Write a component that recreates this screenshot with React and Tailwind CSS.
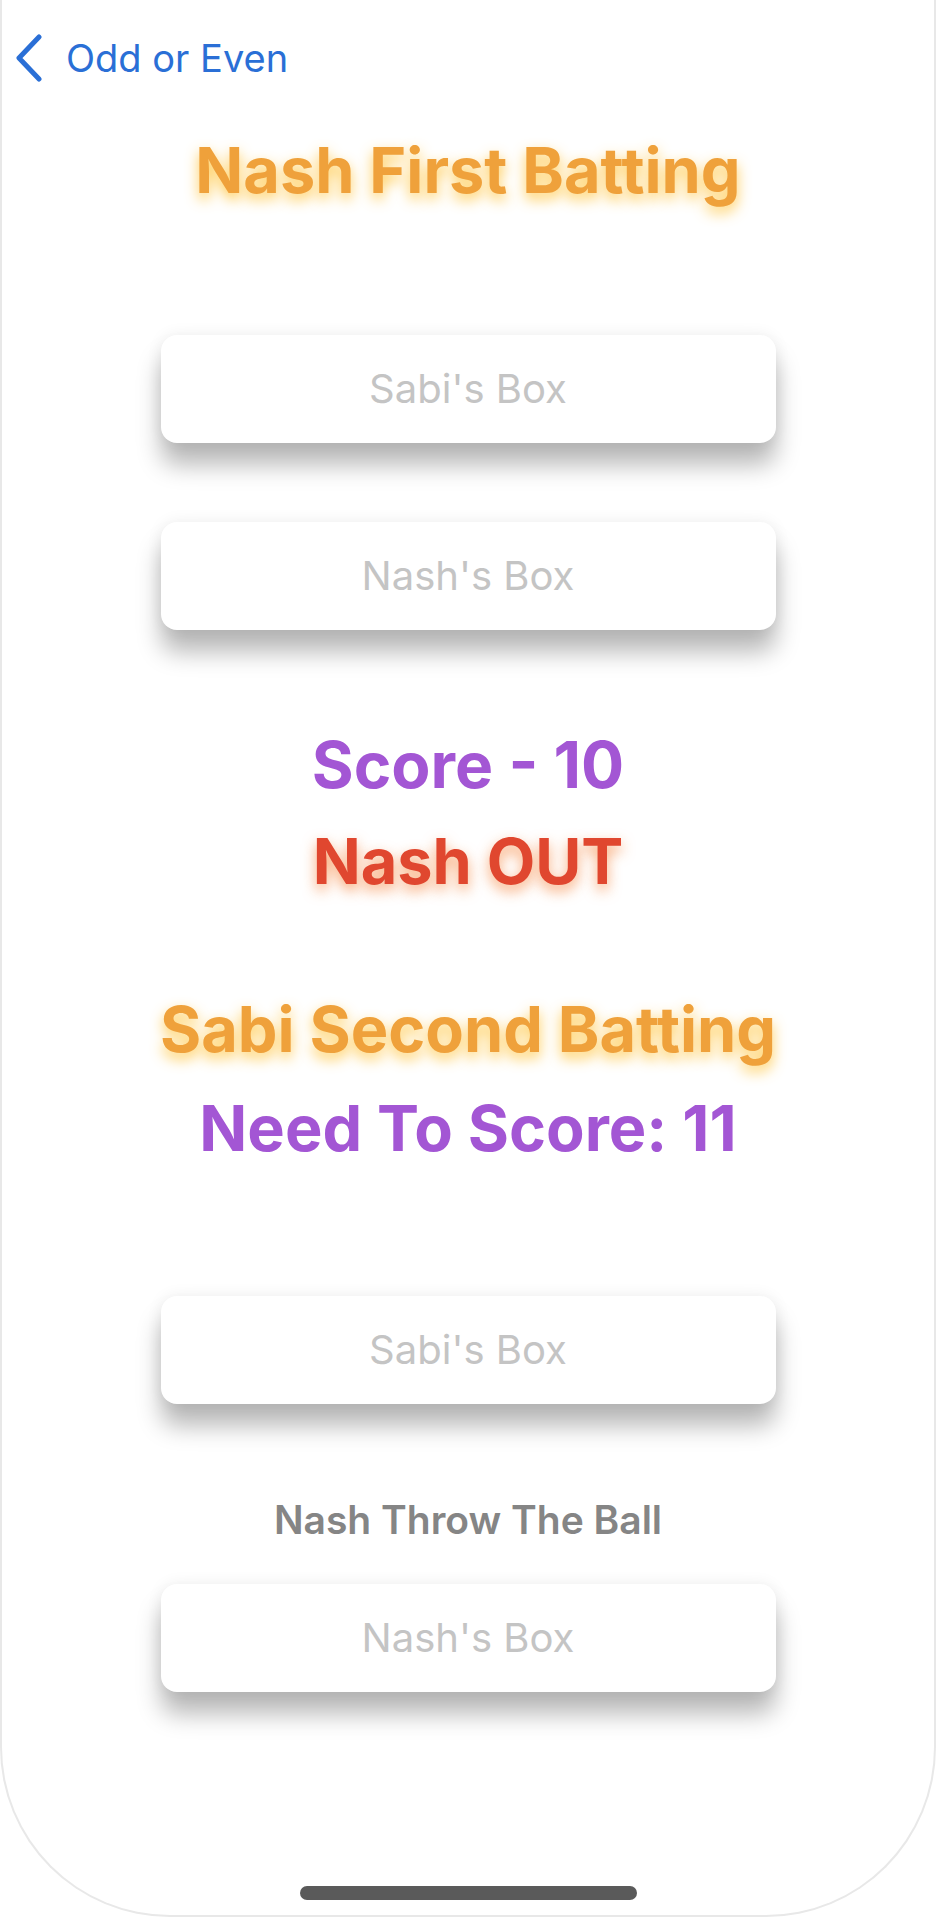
import React from 'react';

const font = { fontFamily: 'Inter, "Noto Sans", sans-serif' };

const Box = ({ label, className = '' }) => (
  <div className={`w-[615px] h-[108px] bg-white rounded-[16px] flex items-center justify-center shadow-[0_22px_24px_rgba(0,0,0,0.28),0_0_16px_rgba(0,0,0,0.07)] ${className}`}>
    <span className="text-[40px] leading-none text-[#c4c4c4]">{label}</span>
  </div>
);

export default function App() {
  return (
    <div className="w-[938px] h-[1919px] bg-white overflow-hidden" style={font}>
      <div className="w-[936px] h-[1917px] border-x-2 border-b-2 border-[#e8e8e8] rounded-b-[170px] flex flex-col items-center">
        {/* nav bar */}
        <div className="self-start mt-[36px] h-[44px] flex items-center">
          <svg width="30" height="48" viewBox="0 0 30 48" className="ml-[12px]">
            <polyline points="25,3 5,24 25,45" fill="none" stroke="#2a6fd6" strokeWidth="5" strokeLinecap="round" strokeLinejoin="round" />
          </svg>
          <span className="ml-[22px] text-[38px] leading-none text-[#2a6fd6]">Odd or Even</span>
        </div>

        <h1 className="mt-[59px] text-[63px] leading-none font-bold text-[#efa13b] [text-shadow:0_6px_14px_rgba(255,190,40,0.8)]">
          Nash First Batting
        </h1>

        <Box label="Sabi's Box" className="mt-[133px]" />
        <Box label="Nash's Box" className="mt-[79px]" />

        <div className="mt-[103px] text-[64px] leading-none font-bold text-[#a356d4]">Score - 10</div>
        <div className="mt-[33px] text-[63px] leading-none font-bold text-[#e0472f] [text-shadow:0_6px_14px_rgba(245,120,40,0.65)]">Nash OUT</div>

        <div className="mt-[105px] text-[63px] leading-none font-bold text-[#efa13b] [text-shadow:0_6px_14px_rgba(255,190,40,0.8)]">Sabi Second Batting</div>
        <div className="mt-[36px] text-[63px] leading-none font-bold text-[#a356d4]">Need To Score: 11</div>

        <Box label="Sabi's Box" className="mt-[136px]" />

        <div className="mt-[96px] text-[39px] leading-none font-semibold text-[#858585]">Nash Throw The Ball</div>

        <Box label="Nash's Box" className="mt-[45px]" />

        <div className="mt-auto mb-[15px] w-[337px] h-[14px] rounded-full bg-[#5a5a5a]" />
      </div>
    </div>
  );
}
